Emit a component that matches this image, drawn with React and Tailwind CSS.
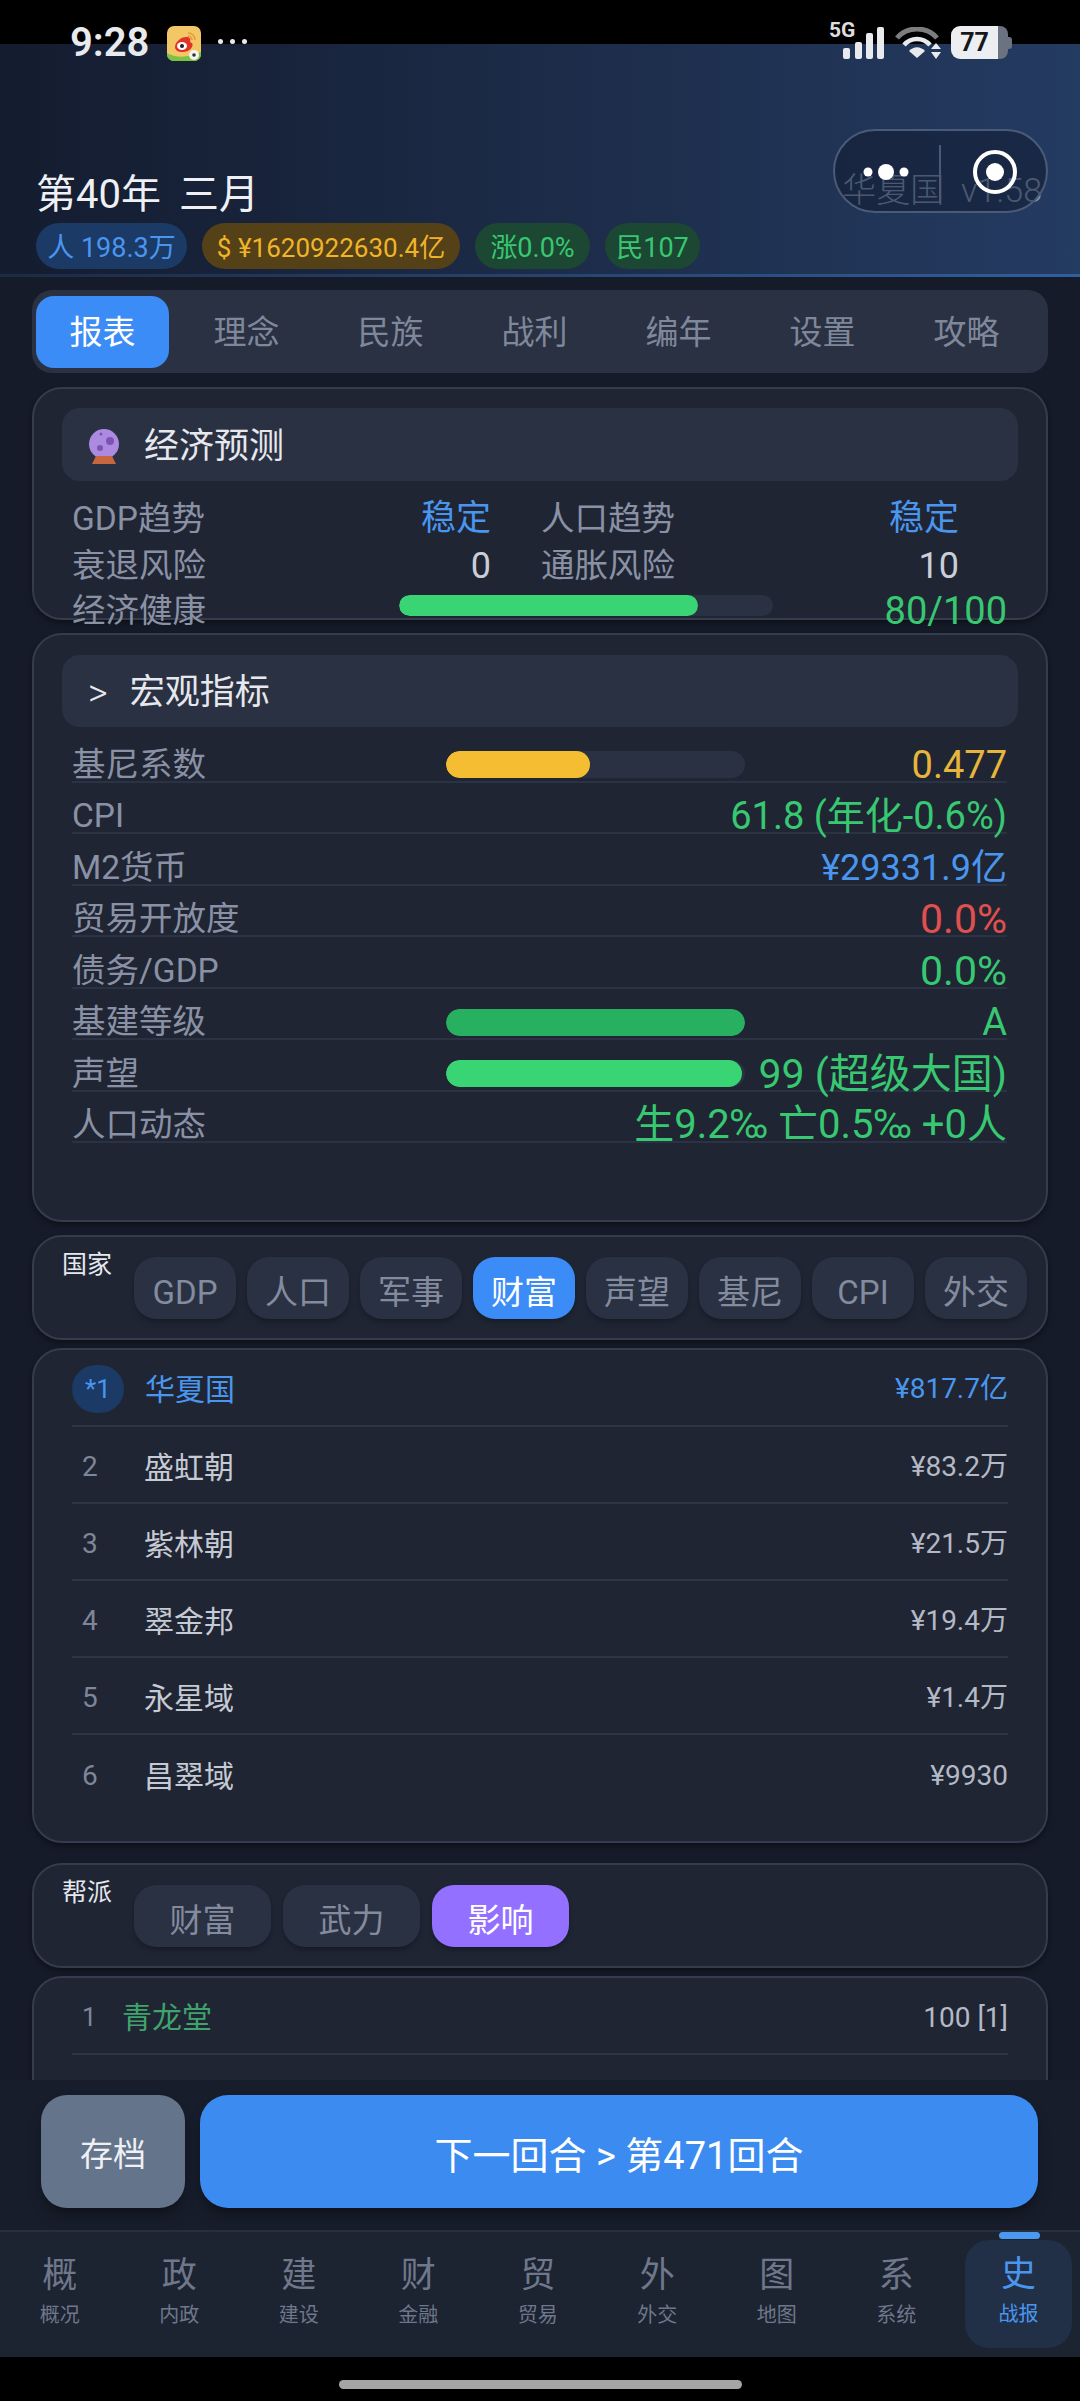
import React from 'react'

const TOP_TABS = ['报表', '理念', '民族', '战利', '编年', '设置', '攻略']
const COUNTRY_CHIPS = ['GDP', '人口', '军事', '财富', '声望', '基尼', 'CPI', '外交']
const GANG_CHIPS = ['财富', '武力', '影响']
const RANKS = [
  ['2', '盛虹朝', '¥83.2万'],
  ['3', '紫林朝', '¥21.5万'],
  ['4', '翠金邦', '¥19.4万'],
  ['5', '永星域', '¥1.4万'],
  ['6', '昌翠域', '¥9930'],
]
const NAV = [
  ['概', '概况'],
  ['政', '内政'],
  ['建', '建设'],
  ['财', '金融'],
  ['贸', '贸易'],
  ['外', '外交'],
  ['图', '地图'],
  ['系', '系统'],
]

function StatusBar() {
  return (
    <div className="absolute left-0 top-0 w-full h-[60px] z-20">
      <span className="absolute left-[70px] top-[19px] text-[40px] leading-[48px] font-semibold text-[#e8eaee]">9:28</span>
      <svg className="absolute left-[167px] top-[26px]" width="34" height="35" viewBox="0 0 34 35">
        <rect width="34" height="35" rx="7" fill="#f3c766" />
        <path d="M0 27c8 5 22 5 34-1v2a7 7 0 0 1-7 7H7a7 7 0 0 1-7-7z" fill="#7cc243" />
        <path d="M8 21c0-5 6-10 11-10 4 0 5 2 4 5 3 1 3 3 2 5-2 4-6 5-10 5-4 0-7-2-7-5z" fill="#e2332b" />
        <ellipse cx="15" cy="20" rx="5" ry="4" fill="#fff" />
        <circle cx="15" cy="20" r="2" fill="#222" />
        <path d="M21 7c4 0 7 3 7 7M21 10c2 0 4 2 4 4" fill="none" stroke="#eb9a3c" strokeWidth="1.6" />
        <circle cx="27" cy="29" r="5" fill="#f4f4f4" />
        <circle cx="27" cy="29" r="1.8" fill="#333" />
      </svg>
      <div className="absolute left-[218px] top-[39px] flex gap-[7px]">
        <span className="w-[5px] h-[5px] rounded-full bg-[#e8eaee]" />
        <span className="w-[5px] h-[5px] rounded-full bg-[#e8eaee]" />
        <span className="w-[5px] h-[5px] rounded-full bg-[#e8eaee]" />
      </div>
      <span className="absolute left-[829px] top-[20px] text-[21px] leading-[21px] font-bold text-[#dedede]">5G</span>
      <svg className="absolute left-[843px] top-[27px]" width="41" height="32" viewBox="0 0 41 32">
        <rect x="0" y="21" width="7" height="11" rx="2" fill="#e8eaee" />
        <rect x="12" y="15" width="7" height="17" rx="2" fill="#e8eaee" />
        <rect x="23" y="6" width="7" height="26" rx="2" fill="#e8eaee" />
        <rect x="34" y="0" width="7" height="32" rx="2" fill="#e8eaee" />
      </svg>
      <svg className="absolute left-[895px] top-[27px]" width="48" height="32" viewBox="0 0 48 32">
        <path d="M2 11C12 -1 32 -1 42 11" fill="none" stroke="#7d7d7d" strokeWidth="5" />
        <path d="M9 18c7-8 19-8 26 0" fill="none" stroke="#e8eaee" strokeWidth="4.5" />
        <path d="M14 24c5-5 11-5 16 0l-8 7z" fill="#e8eaee" />
        <path d="M41 16l5 6H36zM41 32l5-7H36z" fill="#e8eaee" />
      </svg>
      <div className="absolute left-[951px] top-[26px] w-[61px] h-[33px] flex items-center">
        <div className="w-[47px] h-full rounded-l-[9px] bg-[#eceef2] flex items-center justify-center">
          <span className="text-[25px] leading-none font-bold text-[#15171c]">77</span>
        </div>
        <div className="w-[10px] h-full rounded-r-[8px] bg-[#6b7280]" />
        <div className="w-[4px] h-[12px] rounded-r-[3px] bg-[#6b7280]" />
      </div>
    </div>
  )
}

function Capsule() {
  return (
    <div className="absolute left-[833px] top-[85px] w-[215px] h-[84px] rounded-full border-2 border-[#4a5b78] bg-[#0e1526]/45 z-10">
      <svg className="absolute left-0 top-0" width="211" height="80" viewBox="0 0 211 80">
        <circle cx="33" cy="41" r="4.5" fill="#fff" />
        <circle cx="51" cy="41" r="8" fill="#fff" />
        <circle cx="69" cy="41" r="4.5" fill="#fff" />
        <line x1="105" y1="14" x2="105" y2="72" stroke="#4d5a72" strokeWidth="2" />
        <circle cx="160" cy="41" r="20" fill="none" stroke="#fff" strokeWidth="4" />
        <circle cx="160" cy="41" r="9" fill="#fff" />
      </svg>
    </div>
  )
}

function Header() {
  return (
    <header className="relative h-[233px] shrink-0 bg-linear-to-r from-[#141c2f] to-[#243b62]">
      <Capsule />
      <span className="absolute right-[38px] top-[125px] text-[34px] leading-[42px] font-light whitespace-nowrap text-[#7f93ad]">华夏国&nbsp;&nbsp;v1.58</span>
      <div className="absolute left-[36px] top-[124px] text-[40px] leading-[54px] text-[#eef0f4] [word-spacing:8px]">第40年 三月</div>
      <div className="absolute left-[36px] top-[179px] flex gap-[15px] text-[27px] leading-[50px]">
        <span className="h-[46px] w-[151px] rounded-full bg-[#1c3a66] text-[#4a96ee] text-center whitespace-nowrap">人 198.3万</span>
        <span className="h-[46px] w-[258px] rounded-full bg-[#544118] text-[#f0b429] text-[26px] text-center whitespace-nowrap">$ ¥1620922630.4亿</span>
        <span className="h-[46px] w-[115px] rounded-full bg-[#1c4732] text-[#37c871] text-center whitespace-nowrap">涨0.0%</span>
        <span className="h-[46px] w-[95px] rounded-full bg-[#1c4732] text-[#37c871] text-center whitespace-nowrap">民107</span>
      </div>
      <div className="absolute left-0 bottom-0 w-full h-[3px] bg-linear-to-r from-[#1c2a44] to-[#315f9e]" />
    </header>
  )
}

function CrystalBall() {
  return (
    <svg width="32" height="36" viewBox="0 0 32 36">
      <circle cx="16" cy="15" r="15" fill="#ab8ae0" />
      <circle cx="22" cy="12" r="4" fill="#7d52b5" />
      <circle cx="12" cy="19" r="3" fill="#7d52b5" />
      <circle cx="13" cy="5" r="1.5" fill="#7d52b5" />
      <path d="M8 27h16l4 8H4z" fill="#c8673f" />
    </svg>
  )
}

function Bar({ fill, pct, width }) {
  return (
    <div className={`h-[27px] rounded-full bg-[#2a3142] overflow-hidden ${width}`}>
      <div className={`h-full rounded-full ${fill}`} style={{ width: `${pct}%` }} />
    </div>
  )
}

function Row({ label, value, color, bar, size = 'text-[38px]' }) {
  return (
    <div className="flex items-center h-[51.5px] pt-[18px] border-b-2 border-[#2b3243]">
      <span className="w-[374px] shrink-0 text-[#8a91a5]">{label}</span>
      {bar}
      <span className={`ml-auto whitespace-nowrap ${size} ${color}`}>{value}</span>
    </div>
  )
}

function Chip({ label, active, width, activeBg }) {
  return (
    <div className={`h-[62px] rounded-[22px] flex items-center justify-center pt-[10px] text-[33px] shadow-md shadow-black/20 ${width} ${active ? `${activeBg} text-white` : 'bg-[#2a3142] text-[#838b9f]'}`}>
      {label}
    </div>
  )
}

function Card({ className, children }) {
  return (
    <section className={`rounded-[30px] border-2 border-[#353c4d] bg-[#1f2533] shadow-md shadow-black/30 shrink-0 ${className}`}>
      {children}
    </section>
  )
}

function EconomyForecast() {
  return (
    <Card className="h-[233px] mt-[14px] px-[28px] pt-[19px] text-[33.5px] leading-[44px]">
      <div className="h-[73px] rounded-[18px] bg-[#2a3142] flex items-center pl-[26px] gap-[24px] pt-[4px] text-[35px] text-[#e6e8ee]">
        <CrystalBall />
        <span>经济预测</span>
      </div>
      <div className="pl-[10px] pr-[11px]">
        <div className="flex h-[47px] mt-[14px] items-center text-[#8a91a5]">
          <span className="w-[419px] flex justify-between pr-0">
            <span>GDP趋势</span>
            <span className="text-[35px] text-[#4a96ee]">稳定</span>
          </span>
          <span className="w-[418px] ml-[50px] flex justify-between">
            <span>人口趋势</span>
            <span className="text-[35px] text-[#4a96ee]">稳定</span>
          </span>
        </div>
        <div className="flex h-[47px] items-center text-[#8a91a5]">
          <span className="w-[419px] flex justify-between">
            <span>衰退风险</span>
            <span className="text-[36px] text-[#c9ced9]">0</span>
          </span>
          <span className="w-[418px] ml-[50px] flex justify-between">
            <span>通胀风险</span>
            <span className="text-[36px] text-[#c9ced9]">10</span>
          </span>
        </div>
        <div className="flex h-[44px] items-center text-[#8a91a5]">
          <span className="w-[327px] shrink-0">经济健康</span>
          <div className="w-[374px] h-[21px] -mt-[12px] rounded-full bg-[#2a3142] overflow-hidden">
            <div className="h-full w-[80%] rounded-full bg-[#39d474]" />
          </div>
          <span className="ml-auto text-[38px] text-[#37c871]">80/100</span>
        </div>
      </div>
    </Card>
  )
}

function MacroIndicators() {
  return (
    <Card className="h-[589px] mt-[13px] px-[28px] pt-[20px] text-[33.5px] leading-[44px]">
      <div className="h-[72px] rounded-[18px] bg-[#2a3142] flex items-center pl-[26px] gap-[22px] pt-[4px] text-[35px] text-[#e6e8ee]">
        <span className="text-[38px] font-light">&gt;</span>
        <span>宏观指标</span>
      </div>
      <div className="pl-[10px] pr-[11px] mt-[4px]">
        <Row label="基尼系数" value="0.477" color="text-[#e8b53c]" bar={<Bar fill="bg-[#f5bd32]" pct={48} width="w-[299px]" />} />
        <Row label="CPI" value="61.8 (年化-0.6%)" color="text-[#37c871]" />
        <Row label="M2货币" value="¥29331.9亿" color="text-[#4a96ee]" size="text-[36px]" />
        <Row label="贸易开放度" value="0.0%" color="text-[#e0504e]" size="text-[41px]" />
        <Row label="债务/GDP" value="0.0%" color="text-[#37c871]" size="text-[41px]" />
        <Row label="基建等级" value="A" color="text-[#37c871]" bar={<Bar fill="bg-[#27b060]" pct={100} width="w-[299px]" />} />
        <Row label="声望" value="99 (超级大国)" color="text-[#37c871]" size="text-[41px]" bar={<Bar fill="bg-[#39d474]" pct={99} width="w-[299px]" />} />
        <Row label="人口动态" value="生9.2‰ 亡0.5‰ +0人" color="text-[#37c871]" size="text-[40px]" />
      </div>
    </Card>
  )
}

function CountryRanking() {
  return (
    <Card className="h-[495px] mt-[8px] px-[38px] text-[30px]">
      <div className="flex items-center h-[77px] pt-[3px] border-b-2 border-[#2e3545]">
        <span className="w-[52px] h-[48px] rounded-full bg-[#1c3a66] text-[#4a96ee] text-[26px] flex items-center justify-center mr-[21px] shrink-0">*1</span>
        <span className="text-[#4a96ee]">华夏国</span>
        <span className="ml-auto text-[28px] text-[#4a96ee]">¥817.7亿</span>
      </div>
      {RANKS.map(([rank, name, value], i) => (
        <div key={rank} className={`flex items-center h-[77px] pt-[5px] ${i < RANKS.length - 1 ? 'border-b-2 border-[#2e3545]' : ''}`}>
          <span className="w-[72px] pl-[10px] shrink-0 text-[28px] text-[#7e869a]">{rank}</span>
          <span className="text-[#c6cad4]">{name}</span>
          <span className="ml-auto text-[28px] text-[#b4b9c6]">{value}</span>
        </div>
      ))}
    </Card>
  )
}

function BottomNav() {
  return (
    <nav className="h-[127px] shrink-0 bg-[#1c2331] border-t-2 border-[#272e3f] flex relative">
      <span className="absolute left-[999px] top-0 w-[41px] h-[7px] rounded-full bg-[#4a9bf0]" />
      {NAV.map(([char, sub]) => (
        <div key={sub} className="w-[119.5px] flex flex-col items-center pt-[21px] text-[#6f778b]">
          <span className="text-[35px] leading-[46px]">{char}</span>
          <span className="text-[20px] leading-[28px] mt-[2px]">{sub}</span>
        </div>
      ))}
      <div className="absolute left-[965px] top-[8px] w-[107px] h-[108px] rounded-[24px] bg-[#212f47] flex flex-col items-center pt-[12px] text-[#4a96ee]">
        <span className="text-[35px] leading-[46px]">史</span>
        <span className="text-[20px] leading-[28px] mt-[2px]">战报</span>
      </div>
    </nav>
  )
}

export default function App() {
  return (
    <div className="relative w-[1080px] h-[2401px] overflow-hidden flex flex-col bg-[#151b28] font-['Roboto','Noto_Sans_CJK_SC',sans-serif]">
      <StatusBar />
      <div className="h-[44px] shrink-0 bg-black" />
      <Header />

      <main className="flex-1 min-h-0 overflow-hidden px-[32px] flex flex-col">
        <div className="mt-[13px] h-[83px] shrink-0 rounded-[20px] bg-[#2a3142] flex items-center pl-[4px] gap-[11px] text-[33px]">
          {TOP_TABS.map((t, i) => (
            <div key={t} className={`w-[133px] h-[72px] rounded-[18px] flex items-center justify-center pt-[2px] ${i === 0 ? 'bg-[#3b8cf6] text-white' : 'text-[#7f879b]'}`}>
              {t}
            </div>
          ))}
        </div>

        <EconomyForecast />
        <MacroIndicators />

        <Card className="h-[105px] mt-[13px] flex pl-[28px]">
          <span className="w-[72px] shrink-0 mt-[13px] text-[25px] leading-[30px] text-[#e6e8ee]">国家</span>
          <div className="flex gap-[11px] mt-[20px]">
            {COUNTRY_CHIPS.map((c) => (
              <Chip key={c} label={c} active={c === '财富'} width="w-[102px]" activeBg="bg-[#3b8cf6]" />
            ))}
          </div>
        </Card>

        <CountryRanking />

        <Card className="h-[105px] mt-[20px] flex pl-[28px]">
          <span className="w-[72px] shrink-0 mt-[13px] text-[25px] leading-[30px] text-[#e6e8ee]">帮派</span>
          <div className="flex gap-[12px] mt-[20px]">
            {GANG_CHIPS.map((c) => (
              <Chip key={c} label={c} active={c === '影响'} width="w-[137px]" activeBg="bg-[#9370ff]" />
            ))}
          </div>
        </Card>

        <Card className="h-[200px] mt-[8px] px-[38px] text-[30px]">
          <div className="flex items-center h-[77px] pt-[4px] border-b-2 border-[#2e3545]">
            <span className="w-[50px] pl-[10px] shrink-0 text-[26px] text-[#7e869a]">1</span>
            <span className="text-[#3fa36b]">青龙堂</span>
            <span className="ml-auto text-[28px] text-[#b4b9c6]">100 [1]</span>
          </div>
        </Card>
      </main>

      <div className="h-[150px] shrink-0 bg-[#171d2b] flex gap-[15px] pl-[41px] pr-[42px] pt-[15px]">
        <button className="w-[144px] h-[113px] rounded-[26px] bg-[#64748b] pt-[6px] text-[33px] text-[#eef0f4] shadow-lg shadow-black/30">存档</button>
        <button className="flex-1 h-[113px] rounded-[28px] bg-[#3b8bf0] pt-[9px] text-[38px] text-white shadow-lg shadow-black/30">下一回合 &gt; 第471回合</button>
      </div>
      <BottomNav />
      <div className="h-[44px] shrink-0 bg-black flex justify-center pt-[23px]">
        <div className="w-[403px] h-[9px] rounded-full bg-[#a5a5a5]" />
      </div>
    </div>
  )
}
